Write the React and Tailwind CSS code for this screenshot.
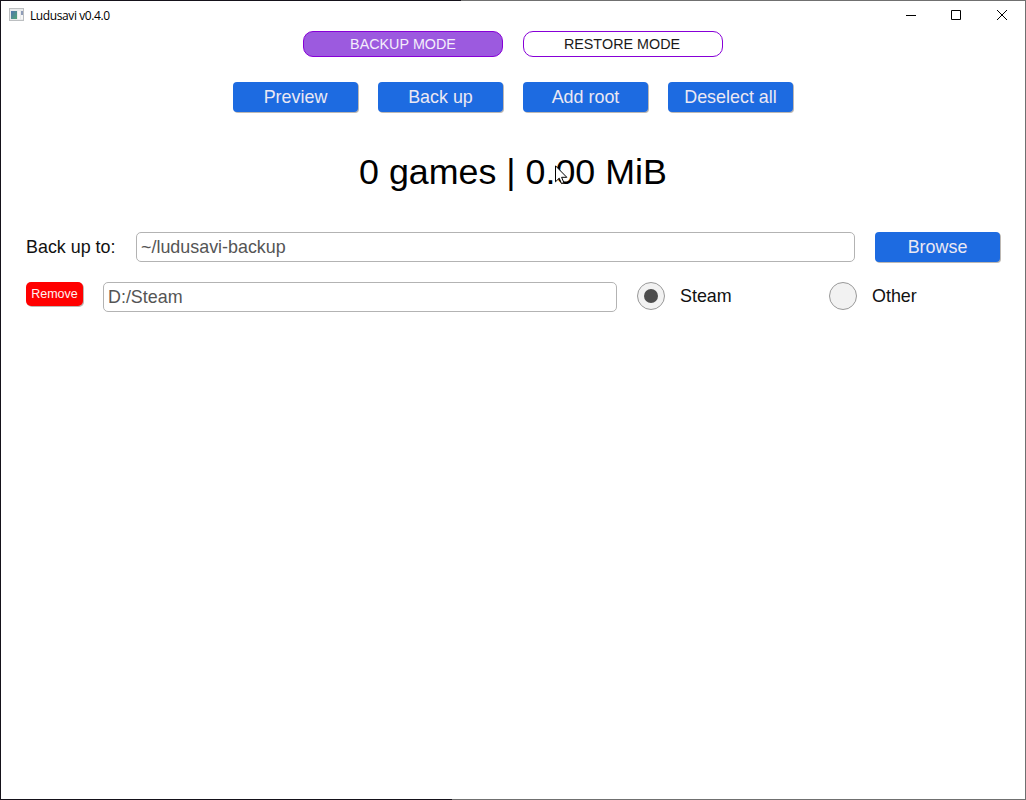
import React from "react";

const font = "[font-family:'Liberation_Sans',Arial,sans-serif] [font-kerning:none]";
const blue =
  "flex h-[30px] w-[125px] shrink-0 items-center justify-center rounded-[4px] bg-[#1d6be1] text-[17.9px] leading-[30px] text-[#ebe8f3] shadow-[1px_1px_0_#bdb8b3]";

function Input({ className, children }) {
  return (
    <div className={`flex h-[30px] items-center rounded-[5px] border border-[#b3b3b3] px-1 text-[17.9px] leading-[28px] text-[#555] ${className}`}>
      {children}
    </div>
  );
}

function Radio({ label, selected, className }) {
  return (
    <div className={`flex items-center ${className}`}>
      <span className="flex h-7 w-7 shrink-0 items-center justify-center rounded-full border border-[#999] bg-[#f2f2f2]">
        {selected && <span className="h-[14px] w-[14px] rounded-full bg-[#4d4d4d]" />}
      </span>
      <span className="ml-[15px] text-[17.9px] leading-7 text-[#111]">{label}</span>
    </div>
  );
}

function TitleBar() {
  return (
    <div className="flex h-[30px] items-start">
      <svg className="ml-2 mt-[7px]" width="16" height="14" viewBox="0 0 16 14">
        <defs>
          <linearGradient id="pane" x1="0" y1="0" x2="1" y2="1">
            <stop offset="0" stopColor="#4f74b0" />
            <stop offset="1" stopColor="#4fa673" />
          </linearGradient>
        </defs>
        <rect x="0.5" y="0.5" width="14" height="12" fill="#e9ebec" stroke="#bcbfc1" />
        <rect x="2" y="3" width="6" height="8" fill="url(#pane)" />
        <rect x="9" y="3" width="2" height="8" fill="#f7f7f7" />
        <rect x="12" y="3" width="2" height="4" fill="#8f9db8" />
        <rect x="12" y="7" width="2" height="4" fill="#f7f7f7" />
      </svg>
      <span className="ml-[5px] mt-[7px] text-[12px] leading-4 tracking-[-0.4px] whitespace-nowrap [font-family:'Open_Sans',sans-serif]">
        Ludusavi v0.4.0
      </span>
      <svg className="ml-auto mr-[17px] mt-[8px]" width="102" height="12" viewBox="0 0 102 12" fill="none" stroke="#000">
        <path d="M0 6.5h10M45.5 1.5h9v9h-9z" />
        <path d="M91 1l10 10M101 1L91 11" />
      </svg>
    </div>
  );
}

export default function App() {
  return (
    <div className={`relative flex h-[800px] w-[1026px] flex-col border border-[#707070] border-l-[#15121a] bg-white text-black ${font}`}>
      <span className="absolute -left-px -top-px h-px w-[461px] bg-[#15121a]" />
      <span className="absolute -left-px -bottom-px h-px w-[452px] bg-[#15121a]" />
      <TitleBar />

      <div className="flex justify-center gap-5 text-[14.32px] leading-6">
        <div className="flex h-[26px] w-[200px] justify-center rounded-[10px] border border-[#8700d7] bg-[#9c5adf] text-[#f4eefb]">
          BACKUP MODE
        </div>
        <div className="flex h-[26px] w-[200px] justify-center rounded-[10px] border border-[#8700d7] pr-[2px] text-[#1a1a1a]">
          RESTORE MODE
        </div>
      </div>

      <div className="mt-[25px] flex justify-center gap-5">
        <div className={blue}>Preview</div>
        <div className={blue}>Back up</div>
        <div className={blue}>Add root</div>
        <div className={blue}>Deselect all</div>
      </div>

      <div className="mt-10 flex justify-center text-[35.8px] leading-10">
        <div className="relative whitespace-nowrap">
          0 games | 0.00 MiB
          <svg className="absolute left-[196px] top-[13px]" width="13" height="20" viewBox="0 0 13 20">
            <path d="M0.5 0.8v16l3.7-3.6 2.3 5.4 2.4-1-2.3-5.3h5.2z" fill="#fff" stroke="#000" strokeWidth="1" />
          </svg>
        </div>
      </div>

      <div className="mt-10 flex items-center px-[25px]">
        <div className="w-[110px] shrink-0 text-[17.9px] leading-[30px] text-[#111]">Back up to:</div>
        <Input className="mr-5 flex-1">~/ludusavi-backup</Input>
        <div className={blue}>Browse</div>
      </div>

      <div className="mt-5 flex items-start px-[25px]">
        <div className="flex h-6 w-[57px] shrink-0 items-center justify-center rounded-[5px] bg-[#f00] text-[12.53px] leading-6 text-[#fff0f0] shadow-[1px_1px_0_#bdb8b3]">
          Remove
        </div>
        <Input className="ml-5 w-[514px]">D:/Steam</Input>
        <Radio label="Steam" selected className="ml-5 w-[192px]" />
        <Radio label="Other" />
      </div>
    </div>
  );
}
